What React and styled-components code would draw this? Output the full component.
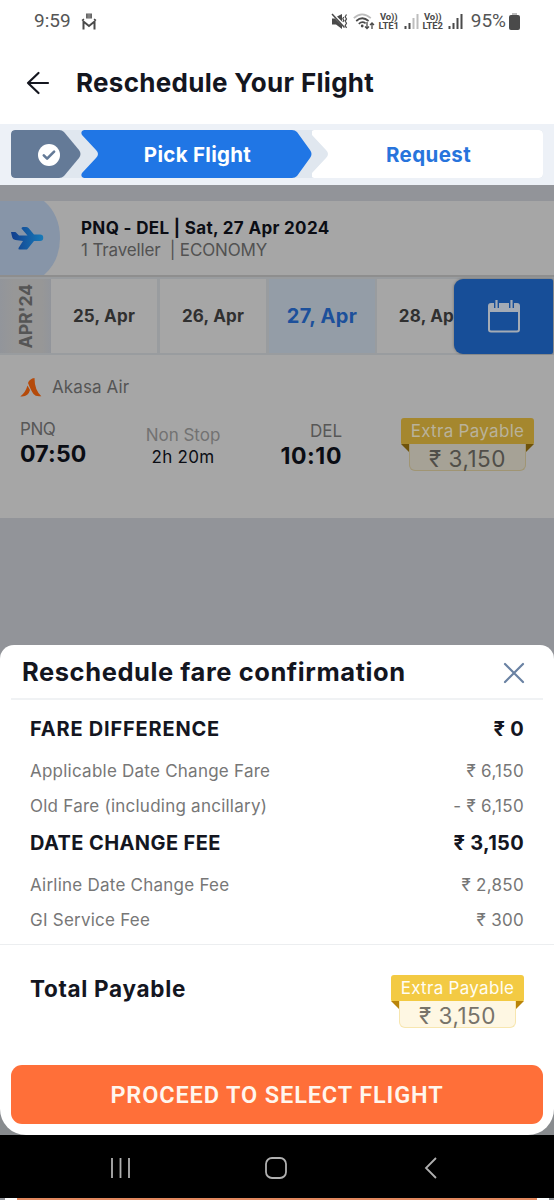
import React from "react";

import styled, { createGlobalStyle, css } from "styled-components";

const GlobalStyle = createGlobalStyle`
  * {
    box-sizing: border-box;
    margin: 0;
    padding: 0;
  }

  body {
    width: 554px;
    height: 1200px;
    overflow: hidden;
    background-color: #ffffff;
    font-family: Inter, Roboto, "Liberation Sans", sans-serif;
  }
`;

const Screen = styled.div`
  width: 554px;
  height: 1200px;
  display: flex;
  flex-direction: column;
  overflow: hidden;
  background-color: #929499;
`;

const Text = styled.span`
  display: block;
  white-space: nowrap;
  font-size: ${({ $size }) => $size || 17}px;
  font-weight: ${({ $weight }) => $weight || 400};
  line-height: ${({ $line }) => $line || 24}px;
  letter-spacing: ${({ $ls }) => $ls || 0}px;
  color: ${({ $color }) => $color || "#14161f"};
`;

const SystemText = styled(Text)`
  font-family: Roboto, sans-serif;
`;

/* status bar */
const StatusBar = styled.div`
  height: 45px;
  flex: none;
  padding: 0 34px 3px 34px;
  display: flex;
  align-items: center;
  background-color: #ffffff;

  svg {
    flex: none;
    display: block;
  }
`;

const StatusIcons = styled.div`
  margin-left: auto;
  display: flex;
  align-items: center;
`;

const Volte = styled.div`
  width: 22px;
  margin: 0 4px 0 3px;
  font-family: Roboto, sans-serif;
  font-size: 9.5px;
  font-weight: 700;
  line-height: 9px;
  letter-spacing: -0.1px;
  text-align: center;
  white-space: nowrap;
  color: #4a4a4a;
`;

/* header */
const Header = styled.header`
  height: 79px;
  flex: none;
  padding: 0 0 3px 26px;
  display: flex;
  align-items: center;
  gap: 26px;
  background-color: #ffffff;
`;

/* steps */
const StepBar = styled.div`
  height: 61px;
  flex: none;
  padding: 6px 11px 7px;
  background-color: #edf1f7;
`;

const StepTrack = styled.div`
  height: 48px;
  display: flex;
  border-radius: 4px;
  background-color: #e0e7ef;
  overflow: hidden;
`;

const Step = styled.div`
  width: ${({ $width }) => $width}px;
  height: 48px;
  flex: none;
  display: flex;
  align-items: center;
  justify-content: center;
  padding-top: 1px;
  padding-left: ${({ $shift }) => $shift || 0}px;
  background-color: ${({ $bg }) => $bg};
  clip-path: path("${({ $shape }) => $shape}");
`;

/* route */
const RouteCard = styled.div`
  height: 76px;
  flex: none;
  margin-top: 16px;
  display: flex;
  background-color: #a6a6a6;
  border-bottom: 2px solid #8e8e8e;
`;

const RouteIcon = styled.div`
  width: 60px;
  height: 74px;
  padding-left: 10px;
  display: flex;
  align-items: center;
  background-color: #8795a8;
  clip-path: path("M0 0H44Q60 14 60 37Q60 60 44 74H0Z");
`;

const RouteInfo = styled.div`
  padding: 16px 0 0 21px;
`;

/* dates */
const DateStrip = styled.div`
  position: relative;
  height: 78px;
  flex: none;
  padding: 2px 0;
  display: flex;
  background-color: #999c9f;
  overflow: hidden;
`;

const Month = styled.div`
  width: 51px;
  display: flex;
  align-items: center;
  justify-content: center;
  background: linear-gradient(90deg, #92959b, #979797 14px, #979797 42px, #92959b);

  span {
    writing-mode: vertical-rl;
    transform: rotate(180deg);
  }
`;

const DateCell = styled.div`
  width: 106px;
  flex: none;
  margin-right: 3px;
  display: flex;
  align-items: center;
  justify-content: center;
  background-color: #a6a6a6;

  ${({ $active }) =>
    $active &&
    css`
      margin-right: 2px;
      background-color: #949da7;
    `}
`;

const CalendarButton = styled.button`
  position: absolute;
  top: 2px;
  right: 1px;
  width: 99px;
  height: 75px;
  padding-bottom: 1px;
  display: flex;
  align-items: center;
  justify-content: center;
  border: 0;
  border-radius: 9px 2px 2px 9px;
  background-color: #174e98;
  box-shadow: 0 0 3px rgba(0, 0, 0, 0.35);
`;

/* flight */
const FlightCard = styled.div`
  height: 163px;
  flex: none;
  padding: 20px 20px 0;
  background-color: #a6a6a6;
`;

const Airline = styled.div`
  height: 24px;
  display: flex;
  align-items: center;
  gap: 10px;
`;

const FlightRow = styled.div`
  margin-top: 18px;
  display: flex;
  align-items: flex-start;
`;

const Leg = styled.div`
  width: ${({ $width }) => $width}px;
  margin-left: ${({ $left }) => $left || 0}px;
  padding-top: ${({ $top }) => $top || 0}px;
  display: flex;
  flex-direction: column;
  align-items: ${({ $align }) => $align || "flex-start"};
`;

/* extra payable tag */
const TagBox = styled.div`
  width: 133px;
  flex: none;
  display: flex;
  flex-direction: column;
  align-items: center;
`;

const Ribbon = styled.div`
  width: 133px;
  height: 26px;
  display: flex;
  align-items: center;
  justify-content: center;
  border-radius: 3px 3px 1px 1px;
  background-color: ${({ $dim }) => ($dim ? "#a5872e" : "#f3ca43")};
`;

const TagFoot = styled.div`
  display: flex;
  align-items: flex-start;
`;

const Fold = styled.i`
  width: 8px;
  height: 8px;
  background-color: ${({ $dim }) => ($dim ? "#6f5309" : "#b98409")};
  clip-path: ${({ $right }) =>
    $right ? "polygon(0 0, 100% 0, 0 100%)" : "polygon(0 0, 100% 0, 100% 100%)"};
`;

const TagPrice = styled.div`
  width: 117px;
  height: 27px;
  padding-top: 3px;
  display: flex;
  justify-content: center;
  border: 1px solid ${({ $dim }) => ($dim ? "#a09574" : "#f7e6b0")};
  border-top: 0;
  border-radius: 0 0 6px 6px;
  background-color: ${({ $dim }) => ($dim ? "#a6a296" : "#fef7e3")};
`;

/* bottom sheet */
const SheetArea = styled.div`
  height: 490px;
  flex: none;
  margin-top: 127px;
  background: linear-gradient(#929499 50%, #888b8e 50%);
`;

const Sheet = styled.section`
  height: 490px;
  display: flex;
  flex-direction: column;
  border-radius: 14px 14px 26px 26px;
  background-color: #ffffff;
`;

const SheetHead = styled.div`
  height: 55px;
  margin: 0 11px;
  padding: 2px 18px 0 11px;
  display: flex;
  align-items: center;
  justify-content: space-between;
  border-bottom: 2px solid #f0f2f4;

  h2 {
    margin-bottom: 2px;
  }
`;

const FareList = styled.div`
  height: 245px;
  padding: 12px 30px 0;
  border-bottom: 1px solid #eceef0;
`;

const FareRow = styled.div`
  height: ${({ $heading }) => ($heading ? 34 : 35)}px;
  display: flex;
  align-items: center;
  justify-content: space-between;

  ${({ $heading }) =>
    $heading &&
    css`
      margin-bottom: 7px;
    `}

  ${({ $last }) =>
    $last &&
    css`
      margin-bottom: 3px;
    `}
`;

const Total = styled.div`
  height: 120px;
  padding: 30px 30px 0;
  display: flex;
  align-items: flex-start;
  justify-content: space-between;
`;

const ProceedButton = styled.button`
  height: 59px;
  margin: 0 11px;
  display: flex;
  align-items: center;
  justify-content: center;
  border: 0;
  border-radius: 11px;
  background-color: #ff6f39;
`;

/* android navigation */
const NavBar = styled.nav`
  height: 63px;
  flex: none;
  padding: 2px 117px 0 110px;
  display: flex;
  align-items: center;
  justify-content: space-between;
  background-color: #000000;
`;

const BottomEdge = styled.div`
  height: 2px;
  flex: none;
  background: linear-gradient(
    90deg,
    #929499 5px,
    #ffffff 5px 17px,
    #e3885f 17px 537px,
    #ffffff 537px 549px,
    #929499 549px
  );
`;

const Signal = ({ bars }) => (
  <svg width="15" height="16" viewBox="0 0 15 16">
    {[3, 6, 11, 15].map((h, i) => (
      <rect
        key={i}
        x={0.5 + i * 4}
        y={16 - h}
        width="2"
        height={h}
        fill={i < bars ? "#4a4a4a" : "#bdbdbd"}
      />
    ))}
  </svg>
);

const ExtraPayable = ({ dim }) => (
  <TagBox>
    <Ribbon $dim={dim}>
      <Text $ls={0.3} $color={dim ? "#b9b29b" : "#fffdf3"}>
        Extra Payable
      </Text>
    </Ribbon>
    <TagFoot>
      <Fold $dim={dim} />
      <TagPrice $dim={dim}>
        <Text $size={22.5} $ls={0.5} $color={dim ? "#504e49" : "#77736a"}>
          ₹ 3,150
        </Text>
      </TagPrice>
      <Fold $dim={dim} $right />
    </TagFoot>
  </TagBox>
);

const dates = [
  { label: "25, Apr" },
  { label: "26, Apr" },
  { label: "27, Apr", active: true },
  { label: "28, Apr" },
];

const fares = [
  { label: "FARE DIFFERENCE", value: "₹ 0", heading: true, ls: 0.8 },
  { label: "Applicable Date Change Fare", value: "₹ 6,150" },
  { label: "Old Fare (including ancillary)", value: "- ₹ 6,150", last: true },
  { label: "DATE CHANGE FEE", value: "₹ 3,150", heading: true, ls: 0.4 },
  { label: "Airline Date Change Fee", value: "₹ 2,850" },
  { label: "GI Service Fee", value: "₹ 300" },
];

const App = () => {
  return (
    <Screen>
      <GlobalStyle />
      <StatusBar>
        <SystemText $size={19} $color="#555555">
          9:59
        </SystemText>
        <svg width="16" height="17" viewBox="0 0 16 17" style={{ marginLeft: 10 }}>
          <path d="M5 .5h6v5H5z" fill="#666666" />
          <path d="M6.5 1.5h3v1h-3zM6.5 3.5h3v1h-3z" fill="#999999" />
          <path d="M2.500 16.500V8.500L8 13l5.500-4.500v8" fill="none" stroke="#4a4a4a" strokeWidth="2" />
          <path d="M1 7.500L3 6M15 7.500L13 6" stroke="#4a4a4a" strokeWidth="1.500" />
        </svg>
        <StatusIcons>
          <svg width="17" height="17" viewBox="0 0 17 17">
            <path d="M1 5.500h3l7 7V16l-6-4.600H1zM6 3.500L11 1v7.500z" fill="#4a4a4a" />
            <path d="M1 1l12.500 13.500" stroke="#4a4a4a" strokeWidth="1.500" />
            <path
              d="M15.500 1.500l-1.300 2.200 1.300 2.200-1.300 2.200 1.300 2.200-1.300 2.200 1.300 2.500M12.800 4l-1 1.700 1 1.700-1 1.500"
              fill="none"
              stroke="#4a4a4a"
              strokeWidth="1.200"
            />
          </svg>
          <svg width="22" height="17" viewBox="0 0 22 17" style={{ marginLeft: 5 }}>
            <g fill="none" strokeWidth="1.700">
              <path d="M.8 5.200Q9 -2.500 17.800 5.200" stroke="#bdbdbd" />
              <path d="M3.200 8Q9.300 2.500 15.600 8" stroke="#4a4a4a" />
              <path d="M5.800 10.800Q9.300 7.800 12.600 10.400" stroke="#4a4a4a" />
            </g>
            <circle cx="9.200" cy="13" r="1.400" fill="#4a4a4a" />
            <path
              d="M14 9v6.500M12 13.500l2 2 2-2M19 16V10M17 12l2-2 2 2"
              fill="none"
              stroke="#4a4a4a"
              strokeWidth="1.300"
            />
          </svg>
          <Volte>
            Vo))
            <br />
            LTE1
          </Volte>
          <Signal bars={2} />
          <Volte>
            Vo))
            <br />
            LTE2
          </Volte>
          <Signal bars={4} />
          <SystemText $size={19} $color="#555555" style={{ marginLeft: 8 }}>
            95%
          </SystemText>
          <svg width="11" height="17" viewBox="0 0 11 17" style={{ marginLeft: 3 }}>
            <path d="M3 0h5v3H3z" fill="#bdbdbd" />
            <rect y="2" width="11" height="15" rx="2" fill="#4a4a4a" />
          </svg>
        </StatusIcons>
      </StatusBar>

      <Header>
        <svg width="24" height="24" viewBox="0 0 24 24">
          <path
            d="M22 12H2M12.500 2L2 12l10.500 10"
            fill="none"
            stroke="#14161f"
            strokeWidth="2.200"
            strokeLinecap="round"
            strokeLinejoin="round"
          />
        </svg>
        <Text as="h1" $size={26} $weight={700} $ls={0.3} $line={32}>
          Reschedule Your Flight
        </Text>
      </Header>

      <StepBar>
        <StepTrack>
          <Step
            $width={70}
            $shift={6}
            $bg="#647a97"
            $shape="M4 0H48Q51 0 53 2L68 20Q71 24 68 28L53 46Q51 48 48 48H4Q0 48 0 44V4Q0 0 4 0Z"
          >
            <svg width="22" height="22" viewBox="0 0 22 22">
              <circle cx="11" cy="11" r="11" fill="#ffffff" />
              <path
                d="M5.800 11.300l3.300 3.300 7-7"
                fill="none"
                stroke="#647a97"
                strokeWidth="2.600"
                strokeLinecap="round"
                strokeLinejoin="round"
              />
            </svg>
          </Step>
          <Step
            $width={231}
            $shift={2}
            $bg="#2076e5"
            $shape="M3 0H211Q214 0 216 2L229 20Q232 24 229 28L216 46Q214 48 211 48H3Q-1 47 1 43L15 28Q19 24 15 20L1 5Q-1 1 3 0Z"
          >
            <Text $size={20.5} $weight={700} $ls={0.3} $color="#ffffff">
              Pick Flight
            </Text>
          </Step>
          <Step
            $width={231}
            $shift={2}
            $bg="#ffffff"
            $shape="M2 0H227Q231 0 231 4V44Q231 48 227 48H2Q-2 47 0 43L14 28Q18 24 14 20L0 5Q-2 1 2 0Z"
          >
            <Text $size={20.5} $weight={700} $ls={0.4} $color="#2774dc">
              Request
            </Text>
          </Step>
        </StepTrack>
      </StepBar>

      <RouteCard>
        <RouteIcon>
          <svg width="34" height="25" viewBox="0 0 34 25">
            <defs>
              <linearGradient id="plane" x1="0" y1="0" x2="1" y2="0">
                <stop offset="0" stopColor="#123d8d" />
                <stop offset="1" stopColor="#187bb8" />
              </linearGradient>
            </defs>
            <path
              d="M1 6h4q1 0 1.500 1L9 9.500h8.500L11.500 2.500Q11.500 1 13 1h3q1.500 0 2.500 1L24 8.500h6a3.200 3.200 0 0 1 0 6.500h-6l-6.500 8q-.5.500-1.500.5H9.500q-1.500 0-1-1.500L13 15 5.500 14Q2.500 13.500 2 10.500z"
              fill="url(#plane)"
            />
          </svg>
        </RouteIcon>
        <RouteInfo>
          <Text $weight={700} $ls={0.33} $line={22} $color="#0b0d14">
            PNQ - DEL | Sat, 27 Apr 2024
          </Text>
          <Text $ls={-0.15} $line={22} $color="#525252">
            1 Traveller &nbsp;| ECONOMY
          </Text>
        </RouteInfo>
      </RouteCard>

      <DateStrip>
        <Month>
          <Text $size={17.5} $weight={700} $color="#555555">
            APR'24
          </Text>
        </Month>
        {dates.map(({ label, active }) => (
          <DateCell key={label} $active={active}>
            <Text
              $size={active ? 20 : 17}
              $weight={700}
              $ls={active ? 0.3 : 0.2}
              $color={active ? "#1c509b" : "#303030"}
            >
              {label}
            </Text>
          </DateCell>
        ))}
        <CalendarButton>
          <svg width="32" height="34" viewBox="0 0 32 34">
            <path
              d="M3 5h26q2 0 2 2v23.500q0 2-2 2H3q-2 0-2-2V7q0-2 2-2z"
              fill="none"
              stroke="#a4abb5"
              strokeWidth="2"
            />
            <path d="M1 5h30v8H1z" fill="#a4abb5" />
            <path d="M8.500 1v8M23.500 1v8" stroke="#174e98" strokeWidth="5" />
            <path d="M8.500 1v8M23.500 1v8" stroke="#a4abb5" strokeWidth="2.200" />
          </svg>
        </CalendarButton>
      </DateStrip>

      <FlightCard>
        <Airline>
          <svg width="22" height="19" viewBox="0 0 22 19">
            <path d="M.3 18.500Q5.500 14.500 7.500 7.500L10 12Q8.500 18 2 18.500z" fill="#b54a0a" />
            <path d="M8 5Q9.500.8 14.500 0 14.500 12 21.300 18.200 15.500 19 13.500 16 11 12.500 8 5z" fill="#b54a0a" />
          </svg>
          <Text $ls={0.1} $color="#555555">
            Akasa Air
          </Text>
        </Airline>
        <FlightRow>
          <Leg $width={90}>
            <Text $ls={-0.4} $color="#575757">
              PNQ
            </Text>
            <Text $size={23} $weight={700} $ls={0.2} $line={26} $color="#0b0d14">
              07:50
            </Text>
          </Leg>
          <Leg $width={90} $left={28} $top={6} $align="center">
            <Text $color="#727272">Non Stop</Text>
            <Text $ls={0.3} $line={20} $color="#0b0d14">
              2h 20m
            </Text>
          </Leg>
          <Leg $width={90} $left={24} $top={2} $align="flex-end">
            <Text $color="#575757">DEL</Text>
            <Text $size={23} $weight={700} $ls={0.6} $line={26} $color="#0b0d14">
              10:10
            </Text>
          </Leg>
          <Leg $width={133} $left={59} $top={1}>
            <ExtraPayable dim />
          </Leg>
        </FlightRow>
      </FlightCard>

      <SheetArea>
        <Sheet>
          <SheetHead>
            <Text as="h2" $size={25.5} $weight={700} $ls={0.57} $line={32}>
              Reschedule fare confirmation
            </Text>
            <svg width="22" height="22" viewBox="0 0 22 22">
              <path
                d="M2 2l18 18M20 2L2 20"
                fill="none"
                stroke="#6a82a3"
                strokeWidth="2.200"
                strokeLinecap="round"
              />
            </svg>
          </SheetHead>
          <FareList>
            {fares.map(({ label, value, heading, last, ls }) => (
              <FareRow key={label} $heading={heading} $last={last}>
                <Text
                  $size={heading ? 20 : 17}
                  $weight={heading ? 700 : 400}
                  $ls={ls || 0.24}
                  $color={heading ? "#14161f" : "#777777"}
                >
                  {label}
                </Text>
                <Text
                  $size={heading ? 20 : 17}
                  $weight={heading ? 700 : 400}
                  $ls={0.3}
                  $color={heading ? "#14161f" : "#777777"}
                >
                  {value}
                </Text>
              </FareRow>
            ))}
          </FareList>
          <Total>
            <Text $size={22.5} $weight={700} $ls={0.7} $line={28}>
              Total Payable
            </Text>
            <ExtraPayable />
          </Total>
          <ProceedButton>
            <SystemText $size={23.5} $weight={600} $ls={0.87} $color="#fff6ee">
              PROCEED TO SELECT FLIGHT
            </SystemText>
          </ProceedButton>
        </Sheet>
      </SheetArea>

      <NavBar>
        <svg width="22" height="22" viewBox="0 0 22 22">
          <path d="M2 1v20M10.500 1v20M19 1v20" stroke="#b0b0b0" strokeWidth="1.800" />
        </svg>
        <svg width="22" height="22" viewBox="0 0 22 22">
          <rect x="1" y="1" width="20" height="20" rx="6" fill="none" stroke="#b0b0b0" strokeWidth="1.800" />
        </svg>
        <svg width="17" height="22" viewBox="0 0 17 22">
          <path d="M16 1L6 11l10 10" fill="none" stroke="#b0b0b0" strokeWidth="1.800" />
        </svg>
      </NavBar>
      <BottomEdge />
    </Screen>
  );
};

export default App;
